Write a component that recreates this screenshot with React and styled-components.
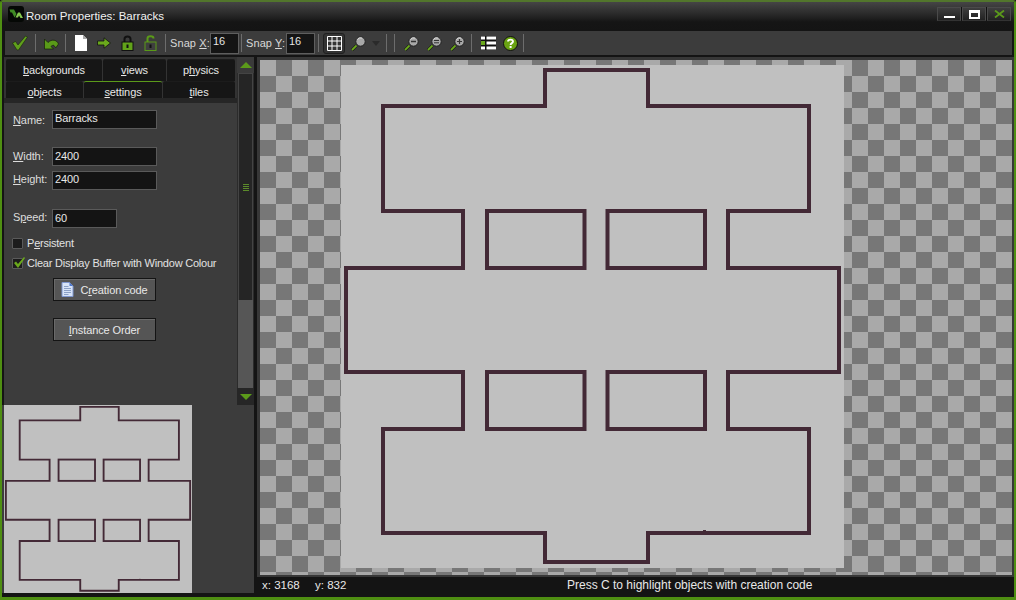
import React from "react";
import styled, { createGlobalStyle } from "styled-components";

const GlobalStyle = createGlobalStyle`
  html, body {
    margin: 0;
    padding: 0;
    background: #141414;
  }
  * {
    box-sizing: border-box;
  }
`;

const OUTLINE =
  "M204 5H307V41H468V146H387V203H498V307H387V364H468V468H307V497H204V468H42V364H122V307H5V203H122V146H42V41H204Z";
const BOXES = [
  [146, 146],
  [266.5, 146],
  [146, 307],
  [266.5, 307],
];

const RoomShape = ({ stroke }) => (
  <svg width="100%" height="100%" viewBox="0 0 503 503" style={{ display: "block" }}>
    <g fill="none" stroke="#432936" strokeWidth={stroke}>
      <path d={OUTLINE} />
      {BOXES.map(([x, y]) => (
        <rect key={`${x}-${y}`} x={x} y={y} width="97.5" height="57" />
      ))}
    </g>
    <rect x="362" y="465" width="3" height="2" fill="#432936" />
  </svg>
);

const Logo = () => (
  <svg width="16" height="16" viewBox="0 0 16 16">
    <rect width="16" height="16" rx="3" fill="#050805" />
    <path d="M1.5 3.5H6L8.5 8L6.5 11.5L4 6.5H2.5Z" fill="#3f8a24" />
    <path d="M7.5 11.5L10 6.5H12L15 12H12.5L11 9.5L10 11.5Z" fill="#86c850" />
  </svg>
);

const Check = () => (
  <svg width="16" height="16" viewBox="0 0 16 16">
    <path d="M0.5 8L3.5 6.5L6 10L13.5 1L15.5 2L6.5 15H5Z" fill="#5f9e1c" stroke="#18240c" strokeWidth="0.6" />
  </svg>
);

const Undo = () => (
  <svg width="16" height="14" viewBox="0 0 16 14">
    <path
      d="M1.5 3V13H10.5L8 10.5C9 9.5 10 9 11 9.5L12.8 11.8L15.5 8C14 4 9 2.5 5 6.5Z"
      fill="#5a9a18"
      stroke="#15200b"
      strokeWidth="0.7"
    />
  </svg>
);

const Page = () => (
  <svg width="12" height="16" viewBox="0 0 12 16">
    <path d="M0 0H8L12 4V16H0Z" fill="#fff" />
    <path d="M8 0V4H12Z" fill="#a8a8a8" />
  </svg>
);

const GoArrow = () => (
  <svg width="14" height="12" viewBox="0 0 14 12">
    <path d="M0.5 4H7V0.8L13.5 6L7 11.2V8H0.5Z" fill="#6aa81c" stroke="#111" strokeWidth="0.8" />
  </svg>
);

const Lock = ({ open }) => (
  <svg width="13" height="16" viewBox="0 0 13 16">
    <path
      d={open ? "M3.5 7V3.5C3.5 0.5 9.5 0.5 9.5 3.5" : "M3.5 7V4C3.5 0.5 9.5 0.5 9.5 4V7"}
      fill="none"
      stroke={open ? "#5a9a18" : "#111"}
      strokeWidth="2"
    />
    <rect x="1" y="7" width="11" height="8.5" fill={open ? "#3f3f3f" : "#62a31a"} stroke={open ? "#5a9a18" : "#111"} />
    <rect x="5.5" y="9.5" width="2" height="3.5" fill="#111" />
  </svg>
);

const GridIcon = () => (
  <svg width="15" height="15" viewBox="0 0 15 15">
    <path d="M0.5 0.5H14.5V14.5H0.5ZM5 0.5V14.5M10 0.5V14.5M0.5 5H14.5M0.5 10H14.5" fill="none" stroke="#fff" />
  </svg>
);

const Magnifier = ({ mark, size = 15 }) => (
  <svg width={size} height={size} viewBox="0 0 15 15">
    <path d="M1 14L5.5 9.5" stroke="#111" strokeWidth="3" />
    <path d="M1 14L5.5 9.5" stroke="#6aa81c" strokeWidth="1.8" />
    <circle cx="9.5" cy="5.5" r="4.7" fill="#a8a8a8" stroke="#222" />
    <path d="M6.5 3.5A4 4 0 0 1 11 2" fill="none" stroke="#ddd" />
    {mark === "minus" && <path d="M7 5.5H12" stroke="#333" strokeWidth="1.4" />}
    {mark === "equal" && <path d="M7 4.5H12M7 6.8H12" stroke="#333" />}
    {mark === "plus" && <path d="M7 5.5H12M9.5 3V8" stroke="#333" strokeWidth="1.2" />}
  </svg>
);

const ListIcon = () => (
  <svg width="15" height="14" viewBox="0 0 15 14">
    <rect x="0" y="0" width="15" height="14" fill="#111" />
    <rect x="0" y="0.5" width="4" height="3" fill="#fff" />
    <rect x="0" y="5" width="4" height="4" fill="#6aa81c" />
    <rect x="0" y="10.5" width="4" height="3" fill="#fff" />
    <rect x="5.5" y="0.5" width="9.5" height="3" fill="#fff" />
    <rect x="5.5" y="5.5" width="9.5" height="3" fill="#fff" />
    <rect x="5.5" y="10.5" width="9.5" height="3" fill="#fff" />
  </svg>
);

const HelpIcon = () => (
  <svg width="15" height="15" viewBox="0 0 15 15">
    <circle cx="7.5" cy="7.5" r="7" fill="#6aa312" stroke="#111" />
    <path d="M5 5.6C5 3 10 3 10 5.6C10 7.3 7.6 7 7.6 9" fill="none" stroke="#fff" strokeWidth="1.9" />
    <rect x="6.6" y="10" width="2" height="2" fill="#fff" />
  </svg>
);

const DocIcon = () => (
  <svg width="13" height="15" viewBox="0 0 12 15">
    <path d="M0.5 0.5H8L11.5 4V14.5H0.5Z" fill="#d7e3f7" stroke="#7f97cf" />
    <path d="M8 0.5V4H11.5Z" fill="#4f78cc" />
    <path d="M2.5 4.5H7M2.5 6.5H9.5M2.5 8.5H9.5M2.5 10.5H9.5M2.5 12.5H7" stroke="#8ba0c6" />
  </svg>
);

const Triangle = ({ down }) => (
  <svg width="12" height="6" viewBox="0 0 12 6">
    <path d={down ? "M0 0H12L6 6Z" : "M0 6H12L6 0Z"} fill="#5b9a1a" />
  </svg>
);

const Win = styled.div`
  width: 1016px;
  height: 600px;
  display: flex;
  flex-direction: column;
  overflow: hidden;
  background: #141414;
  border-style: solid;
  border-color: #4f8f12;
  border-width: 2px 2px 3px 2px;
  border-top-color: #52762c;
  border-radius: 3px 3px 0 0;
  color: #e4e4e4;
  font-family: "Liberation Sans", Arial, sans-serif;
  font-size: 11px;
  letter-spacing: -0.1px;
`;

const TitleBar = styled.div`
  height: 29px;
  flex: none;
  display: flex;
  align-items: flex-start;
  padding: 4px 3px 0 6px;
  background: linear-gradient(#454545 0, #2a2a2a 12px, #151515 20px, #141414 100%);
`;

const TitleText = styled.div`
  margin-left: 2px;
  font-size: 11.5px;
  letter-spacing: 0;
  line-height: 20px;
  color: #f1f1f1;
  flex: 1;
`;

const WinButtons = styled.div`
  display: flex;
  margin-top: 1px;
  background: #111;
  gap: 1px;
`;

const WinButton = styled.div`
  width: 24px;
  height: 14px;
  display: flex;
  align-items: center;
  justify-content: center;
  background: linear-gradient(#3e3e3e, #222);
  border: 1px solid #4a4a4a;
  border-bottom-color: #333;
`;

const MinGlyph = styled.div`
  width: 11px;
  height: 2px;
  margin-top: 6px;
  background: #fff;
`;

const MaxGlyph = styled.div`
  width: 11px;
  height: 9px;
  border: 2px solid #fff;
  border-top-width: 3px;
`;

const Toolbar = styled.div`
  height: 24px;
  flex: none;
  margin: 0 2px 0 3px;
  display: flex;
  align-items: center;
  background: #3c3c3c;
`;

const Slot = styled.div`
  width: ${(p) => p.$w}px;
  height: 24px;
  flex: none;
  display: flex;
  align-items: center;
  justify-content: center;
`;

const Sep = styled.div`
  width: 1px;
  height: 18px;
  flex: none;
  margin: 0 ${(p) => p.$gap || 0}px;
  background: #6d6d6d;
`;

const SnapLabel = styled.div`
  width: 42px;
  flex: none;
  color: #d8d8d8;
  padding-left: 2px;
  letter-spacing: 0.1px;
  white-space: nowrap;
`;

const SnapInput = styled.div`
  width: 29px;
  height: 21px;
  flex: none;
  padding-left: 2px;
  background: #141414;
  border: 1px solid #5e5e5e;
  line-height: 14px;
`;

const GridButton = styled.div`
  width: 22px;
  height: 21px;
  flex: none;
  display: flex;
  align-items: center;
  justify-content: center;
  background: #333;
  border: 1px solid #1f1f1f;
  border-radius: 3px;
`;

const DropArrow = styled.div`
  width: 0;
  height: 0;
  flex: none;
  border-left: 4px solid transparent;
  border-right: 4px solid transparent;
  border-top: 5px solid #2a2a2a;
`;

const Body = styled.div`
  flex: 1;
  min-height: 0;
  display: flex;
  padding-top: 2px;
`;

const Side = styled.div`
  width: 252px;
  flex: none;
  padding-left: 2px;
  display: flex;
  flex-direction: column;
`;

const SideTop = styled.div`
  height: 348px;
  flex: none;
  display: flex;
`;

const Panel = styled.div`
  width: 233px;
  flex: none;
  display: flex;
  flex-direction: column;
  background: #3c3c3c;
`;

const Tabs = styled.div`
  height: 46px;
  flex: none;
  padding: 2px 0 0 2px;
  background: #333;
  border-bottom: 5px solid #262626;
`;

const TabRow = styled.div`
  display: flex;
  height: ${(p) => p.$h}px;
  gap: 1px;
`;

const Tab = styled.div`
  width: ${(p) => p.$w}px;
  flex: none;
  display: flex;
  align-items: center;
  justify-content: center;
  padding-top: ${(p) => p.$pad || 0}px;
  padding-bottom: ${(p) => p.$padBottom || 0}px;
  background: #161616;
  border-top: 1px solid ${(p) => (p.$active ? "#5b9a1a" : "#1c1c1c")};
  border-radius: 2px 2px 0 0;
  color: #e8e8e8;
`;

const Form = styled.div`
  flex: 1;
  padding: 7px 0 0 9px;
`;

const Row = styled.div`
  display: flex;
  align-items: center;
  margin-top: ${(p) => p.$top || 0}px;
`;

const Label = styled.div`
  width: 39px;
  flex: none;
  margin-bottom: ${(p) => p.$lift || 0}px;
  color: #dcdcdc;
`;

const Field = styled.div`
  width: ${(p) => p.$w}px;
  height: 19px;
  flex: none;
  padding-left: 2px;
  background: #141414;
  border: 1px solid #5a5a5a;
  line-height: ${(p) => p.$line || 16}px;
  color: #e8e8e8;
`;

const CheckRow = styled.div`
  height: 11px;
  display: flex;
  align-items: center;
  margin: ${(p) => p.$top}px 0 0 -1px;
  color: #e2e2e2;
  letter-spacing: -0.22px;
  white-space: nowrap;
`;

const CheckText = styled.span`
  margin-bottom: 2px;
`;

const CheckBox = styled.div`
  width: 11px;
  height: 11px;
  flex: none;
  margin-right: 4px;
  display: flex;
  align-items: center;
  justify-content: center;
  background: #1c1c1c;
  border: 1px solid #5a5a5a;
  border-radius: 1px;
`;

const Tick = styled.svg`
  flex: none;
  margin-top: -3px;
  margin-right: -3px;
  overflow: visible;
`;

const PanelButton = styled.div`
  width: 103px;
  height: 23px;
  margin: ${(p) => p.$top}px 0 0 40px;
  display: flex;
  align-items: center;
  justify-content: center;
  gap: 6px;
  background: #555;
  border: 1px solid #141414;
  box-shadow: inset 1px 1px 0 #6a6a6a;
  color: #e8e8e8;
`;

const ScrollBar = styled.div`
  width: 17px;
  flex: none;
  display: flex;
  flex-direction: column;
  background: #2b2b2b;
`;

const ScrollEnd = styled.div`
  height: ${(p) => p.$h}px;
  flex: none;
  display: flex;
  justify-content: center;
  align-items: center;
  background: ${(p) => p.$bg};
`;

const ScrollThumb = styled.div`
  height: 227px;
  flex: none;
  margin: 0 1px;
  display: flex;
  flex-direction: column;
  align-items: center;
  justify-content: center;
  gap: 1px;
  background: #252525;
  border: 1px solid #444;
  border-bottom: none;
`;

const GripLine = styled.div`
  width: 6px;
  height: 1px;
  background: #5b8a2a;
`;

const ScrollTrack = styled.div`
  flex: 1;
  margin: 0 1px;
  background: #565656;
`;

const PreviewRow = styled.div`
  height: 188px;
  flex: none;
  padding-left: 2px;
  background: #3c3c3c;
  margin-left: -2px;
`;

const PreviewRoom = styled.div`
  width: 188px;
  height: 188px;
  background: #c0c0c0;
`;

const Main = styled.div`
  flex: 1;
  min-width: 0;
  display: flex;
  flex-direction: column;
  padding-left: 3px;
`;

const Canvas = styled.div`
  flex: 1;
  min-height: 0;
  overflow: hidden;
  padding: 5px 0 0 81px;
  border-style: solid;
  border-color: #373737;
  border-width: 3px 2px 2px 3px;
  background-color: #a9a9a9;
  background-image: conic-gradient(#a9a9a9 25%, #777 0 50%, #a9a9a9 0 75%, #777 0);
  background-size: 32px 32px;
  background-position: 16px 0;
`;

const Room = styled.div`
  width: 503px;
  height: 503px;
  background: #c0c0c0;
`;

const StatusBar = styled.div`
  height: 20px;
  flex: none;
  display: flex;
  align-items: center;
  padding-bottom: 4px;
  background: #141414;
`;

const StatusCell = styled.div`
  width: ${(p) => p.$w}px;
  flex: none;
  padding-left: ${(p) => p.$pad || 0}px;
  font-size: ${(p) => p.$size}px;
  letter-spacing: 0;
  color: #e8e8e8;
  white-space: nowrap;
`;

const App = () => {
  return (
    <>
      <GlobalStyle />
      <Win>
        <TitleBar>
          <Logo />
          <TitleText>Room Properties: Barracks</TitleText>
          <WinButtons>
            <WinButton><MinGlyph /></WinButton>
            <WinButton><MaxGlyph /></WinButton>
            <WinButton>
              <svg width="11" height="8" viewBox="0 0 11 8">
                <path d="M1 0.5L10 7.5M10 0.5L1 7.5" stroke="#5b9a1a" strokeWidth="1.8" />
              </svg>
            </WinButton>
          </WinButtons>
        </TitleBar>
        <Toolbar>
          <Slot $w={30}><Check /></Slot>
          <Sep />
          <Slot $w={29}><Undo /></Slot>
          <Sep />
          <Slot $w={30}><Page /></Slot>
          <Slot $w={16}><GoArrow /></Slot>
          <Slot $w={31}><Lock /></Slot>
          <Slot $w={15}><Lock open /></Slot>
          <Slot $w={5} />
          <Sep $gap={2} />
          <SnapLabel>Snap <u>X</u>:</SnapLabel>
          <SnapInput>16</SnapInput>
          <Sep $gap={2} />
          <SnapLabel>Snap <u>Y</u>:</SnapLabel>
          <SnapInput>16</SnapInput>
          <Sep $gap={3} />
          <Slot $w={1} />
          <GridButton><GridIcon /></GridButton>
          <Slot $w={26}><Magnifier /></Slot>
          <Slot $w={1} />
          <DropArrow />
          <Slot $w={6} />
          <Sep />
          <Slot $w={7} />
          <Sep />
          <Slot $w={5} />
          <Slot $w={23}><Magnifier mark="minus" /></Slot>
          <Slot $w={23}><Magnifier mark="equal" /></Slot>
          <Slot $w={23}><Magnifier mark="plus" /></Slot>
          <Slot $w={2} />
          <Sep />
          <Slot $w={8} />
          <Slot $w={16}><ListIcon /></Slot>
          <Slot $w={7} />
          <Slot $w={15}><HelpIcon /></Slot>
          <Slot $w={5} />
          <Sep />
        </Toolbar>
        <Body>
          <Side>
            <SideTop>
              <Panel>
                <Tabs>
                  <TabRow $h={22}>
                    <Tab $w={96} $padBottom={2}><span><u>b</u>ackgrounds</span></Tab>
                    <Tab $w={63} $padBottom={2}><span><u>v</u>iews</span></Tab>
                    <Tab $w={68} $padBottom={2}><span>p<u>h</u>ysics</span></Tab>
                  </TabRow>
                  <TabRow $h={17}>
                    <Tab $w={77} $pad={3}><span><u>o</u>bjects</span></Tab>
                    <Tab $w={78} $pad={3} $active><span><u>s</u>ettings</span></Tab>
                    <Tab $w={72} $pad={3}><span><u>t</u>iles</span></Tab>
                  </TabRow>
                </Tabs>
                <Form>
                  <Row>
                    <Label><u>N</u>ame:</Label>
                    <Field $w={105} $line={14}>Barracks</Field>
                  </Row>
                  <Row $top={18}>
                    <Label $lift={2}><u>W</u>idth:</Label>
                    <Field $w={105}>2400</Field>
                  </Row>
                  <Row $top={5}>
                    <Label $lift={4}><u>H</u>eight:</Label>
                    <Field $w={105} $line={14}>2400</Field>
                  </Row>
                  <Row $top={19}>
                    <Label $lift={4}>S<u>p</u>eed:</Label>
                    <Field $w={65}>60</Field>
                  </Row>
                  <CheckRow $top={10}>
                    <CheckBox />
                    <CheckText>P<u>e</u>rsistent</CheckText>
                  </CheckRow>
                  <CheckRow $top={9}>
                    <CheckBox>
                      <Tick width="11" height="11" viewBox="0 0 11 11">
                        <path d="M0 6L2 4.5L4 7L10 0L11 1L4 11Z" fill="#6aa81c" />
                      </Tick>
                    </CheckBox>
                    <CheckText>Clear Display Buffer with Window Colour</CheckText>
                  </CheckRow>
                  <PanelButton $top={9}>
                    <DocIcon />
                    <span>C<u>r</u>eation code</span>
                  </PanelButton>
                  <PanelButton $top={17}>
                    <span><u>I</u>nstance Order</span>
                  </PanelButton>
                </Form>
              </Panel>
              <ScrollBar>
                <ScrollEnd $h={16} $bg="#3a3a3a"><Triangle /></ScrollEnd>
                <ScrollThumb>
                  <GripLine /><GripLine /><GripLine /><GripLine />
                </ScrollThumb>
                <ScrollTrack />
                <ScrollEnd $h={17} $bg="#262626"><Triangle down /></ScrollEnd>
              </ScrollBar>
            </SideTop>
            <PreviewRow>
              <PreviewRoom><RoomShape stroke={5} /></PreviewRoom>
            </PreviewRow>
          </Side>
          <Main>
            <Canvas>
              <Room><RoomShape stroke={4} /></Room>
            </Canvas>
            <StatusBar>
              <StatusCell $w={58} $pad={5} $size={11.5}>x: 3168</StatusCell>
              <StatusCell $w={252} $size={11.5}>y: 832</StatusCell>
              <StatusCell $size={12}>Press C to highlight objects with creation code</StatusCell>
            </StatusBar>
          </Main>
        </Body>
      </Win>
    </>
  );
};

export default App;
